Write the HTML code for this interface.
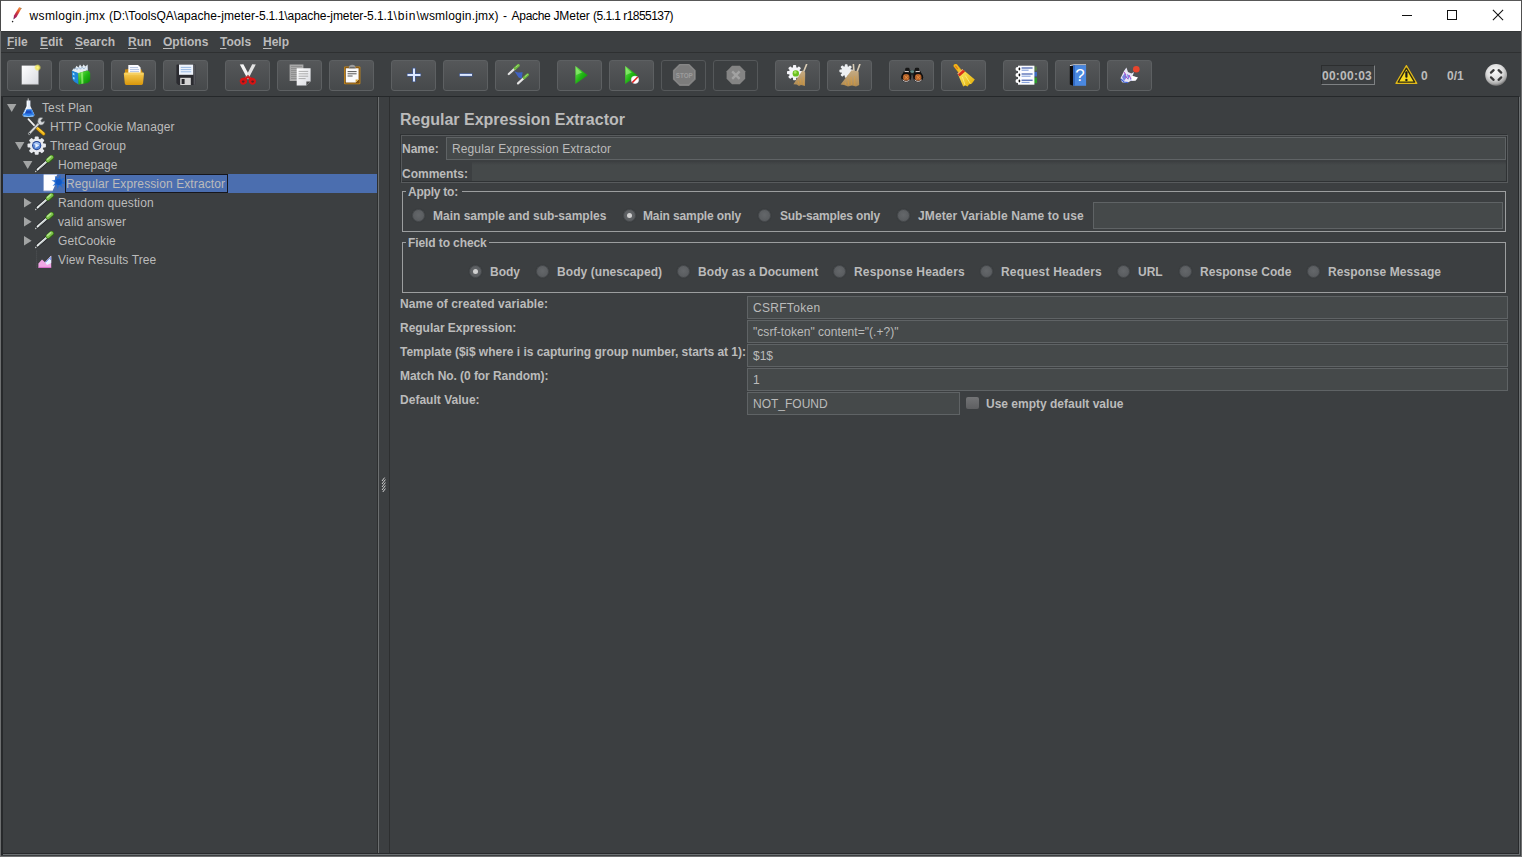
<!DOCTYPE html>
<html><head><meta charset="utf-8"><title>Apache JMeter</title>
<style>
*{box-sizing:border-box;margin:0;padding:0}
html,body{width:1522px;height:857px;overflow:hidden;background:#3c3f41;font-family:"Liberation Sans",Arial,sans-serif;font-size:12px;color:#bbbbbb}
.abs{position:absolute}
#win{position:relative;width:1522px;height:857px;overflow:hidden;background:#3c3f41}
#title{left:1px;top:1px;width:1520px;height:30px;background:#ffffff;color:#000}
#title .t{left:29px;top:8px;font-size:12px;white-space:nowrap;color:#000;line-height:14px}
#title .t2{left:0;top:8px;font-size:12px;line-height:14px;color:#000}
#title .t2 span{position:absolute;top:0;white-space:pre}
#menubar{left:1px;top:31px;width:1520px;height:21px;background:#3c3f41}
.mi{position:absolute;top:4px;font-weight:bold;font-size:12px;line-height:14px;color:#bbbbbb;white-space:nowrap}
.mi u{text-decoration:underline;text-underline-offset:2px}
#toolbar{left:1px;top:53px;width:1520px;height:43px;background:#3c3f41}
.tb{position:absolute;top:7px;width:45px;height:31px;border:1px solid #5d6062;border-radius:3px;background:linear-gradient(#555759,#46494b)}
.tb svg{position:absolute;left:10px;top:3px;width:24px;height:24px}
.lbl{position:absolute;font-weight:bold;white-space:nowrap;line-height:14px}
.txt{position:absolute;white-space:nowrap;line-height:14px}
.tf{position:absolute;background:#45494a;border:1px solid #5f6365;height:23px}
.tf span{position:absolute;left:5px;top:4px;line-height:14px;white-space:nowrap}
.row{position:absolute;left:0;height:19px;width:374px}
.row .txt{top:3px;letter-spacing:.11px}
.radio{position:absolute;width:13px;height:13px;border-radius:50%;background:radial-gradient(circle at 50% 45%,#64676a 0,#5c5f62 55%,#53565a 100%);border:1px solid #484b4e;box-shadow:0 0 1px #2e3033}
.radio.on::after{content:"";position:absolute;left:3px;top:3px;width:5px;height:5px;border-radius:50%;background:#d0d0d0}
.tb.dis{background:#3c3f41;border-color:#55585a}
.grp{border:1px solid #9c9e9f}
.gl{background:#3c3f41}
</style></head>
<body><div id="win">
<!-- window frame -->
<div class="abs" style="left:0;top:0;width:1522px;height:1px;background:#585858"></div>
<div class="abs" style="left:0;top:0;width:1px;height:857px;background:#6e7071"></div><div class="abs" style="left:0;top:0;width:1px;height:31px;background:#4a4a4a"></div>
<div class="abs" id="title">
  <svg class="abs" style="left:7px;top:5px" width="16" height="18" viewBox="0 0 16 18"><defs><linearGradient id="gFea" x1="12.5" y1="1" x2="5.5" y2="13" gradientUnits="userSpaceOnUse"><stop offset="0" stop-color="#f6a04a"/><stop offset=".35" stop-color="#e2552e"/><stop offset=".6" stop-color="#c22a4c"/><stop offset=".85" stop-color="#a01e58"/><stop offset="1" stop-color="#4a2458"/></linearGradient></defs><path d="M11.2 1 L13.4 2.4 L8.6 11 L5.4 13.4 L6 9.6 Z" fill="url(#gFea)"/><path d="M12.6 1.4 L13.6 2.2 L12.8 3.4" fill="#6a5a3a"/><circle cx="4.6" cy="15.6" r=".8" fill="#222"/></svg>
  <div class="abs t2"><span style="left:28.6px;letter-spacing:0.311px">wsmlogin.jmx </span><span style="left:108.0px;letter-spacing:0.010px">(D:\ToolsQA</span><span style="left:172.8px;letter-spacing:0.084px">\apache-jmeter-</span><span style="left:258.1px;letter-spacing:-0.301px">5.1.1</span><span style="left:283.3px;letter-spacing:-0.082px">\apache-jmeter-5.1.1</span><span style="left:392.4px;letter-spacing:0.935px">\bin</span><span style="left:415.5px;letter-spacing:0.203px">\wsmlogin.jmx</span><span style="left:493.5px;letter-spacing:0.532px">) - </span><span style="left:510.6px;letter-spacing:-0.321px">Apache </span><span style="left:552.4px;letter-spacing:-0.045px">JMeter </span><span style="left:592.1px;letter-spacing:-0.547px">(5.1.1 </span><span style="left:622.3px;letter-spacing:-0.558px">r1855137)</span></div>
  <div class="abs" style="left:1401px;top:14px;width:10px;height:1px;background:#111"></div>
  <div class="abs" style="left:1446px;top:9px;width:10px;height:10px;border:1px solid #111"></div>
  <svg class="abs" style="left:1491px;top:8px" width="12" height="12" viewBox="0 0 12 12"><path d="M0.9 0.9L11.1 11.1M11.1 0.9L0.9 11.1" stroke="#111" stroke-width="1.05"/></svg>
</div>
<div class="abs" id="menubar">
  <div class="mi" style="left:6px"><u>F</u>ile</div>
  <div class="mi" style="left:39px"><u>E</u>dit</div>
  <div class="mi" style="left:74px"><u>S</u>earch</div>
  <div class="mi" style="left:127px"><u>R</u>un</div>
  <div class="mi" style="left:162px"><u>O</u>ptions</div>
  <div class="mi" style="left:219px"><u>T</u>ools</div>
  <div class="mi" style="left:262px"><u>H</u>elp</div>
</div>
<div class="abs" style="left:1px;top:52px;width:1520px;height:1px;background:#2e3031"></div><div class="abs" style="left:1px;top:53px;width:1520px;height:1px;background:#484b4d"></div>
<div class="abs" id="toolbar">
<svg width="0" height="0" style="position:absolute"><defs>
<linearGradient id="gGreen" x1="0" y1="0" x2="1" y2="1"><stop offset="0" stop-color="#7dea5a"/><stop offset=".5" stop-color="#22b815"/><stop offset="1" stop-color="#0a7a08"/></linearGradient>
<linearGradient id="gFolder" x1="0" y1="0" x2="0" y2="1"><stop offset="0" stop-color="#f7cf57"/><stop offset="1" stop-color="#d9960a"/></linearGradient>
<linearGradient id="gPage" x1="0" y1="0" x2="1" y2="1"><stop offset="0" stop-color="#ffffff"/><stop offset="1" stop-color="#d8dae0"/></linearGradient>
<linearGradient id="gBroom" x1="0" y1="0" x2="0" y2="1"><stop offset="0" stop-color="#c6ac84"/><stop offset="1" stop-color="#b08a50"/></linearGradient>
<linearGradient id="gYel" x1="0" y1="0" x2="1" y2="1"><stop offset="0" stop-color="#fff06a"/><stop offset="1" stop-color="#e0a800"/></linearGradient>
<radialGradient id="gGlow"><stop offset="0" stop-color="#fff98a"/><stop offset=".5" stop-color="#f4e95a" stop-opacity=".9"/><stop offset="1" stop-color="#f4e95a" stop-opacity="0"/></radialGradient>
<radialGradient id="gBall" cx=".45" cy=".35" r=".62"><stop offset="0" stop-color="#fafafa"/><stop offset=".6" stop-color="#dcdcdc"/><stop offset=".9" stop-color="#a8a8a8"/><stop offset="1" stop-color="#808080"/></radialGradient>
<linearGradient id="gPip" x1="0" y1="1" x2="1" y2="0"><stop offset="0" stop-color="#f0f0f0"/><stop offset=".55" stop-color="#d8d8d8"/><stop offset=".62" stop-color="#7cc04c"/><stop offset="1" stop-color="#5aa032"/></linearGradient>
</defs></svg>
<!-- new -->
<div class="tb" style="left:6px"><svg viewBox="0 0 24 24"><rect x="3.7" y="1.6" width="16.8" height="18.8" fill="url(#gPage)"/><path d="M3.7 20.4h16.8" stroke="#9a9a9a" stroke-width=".6"/><circle cx="19.6" cy="3.6" r="3.6" fill="url(#gGlow)"/></svg></div>
<!-- templates -->
<div class="tb" style="left:58px"><svg viewBox="0 0 24 24"><path d="M2 7 L3.4 4.4 L5 5.2 L6.4 1.8 L8.4 3.6 L10 .6 L12 3 L13.6 .4 L15.4 2.6 L17.6 .4 L17.8 6 L8.4 9.4 Z" fill="#e4ecf2"/><path d="M4 5.4 l1.6 -1.6 l1.4 1.8 l1.8 -2.4 l1.6 2 l1.8 -2.2 l1.6 2 l1.6 -1.6" stroke="#9cb8d8" stroke-width=".9" fill="none"/><path d="M17.6 .6 L17.8 7.4 L16.6 7.6 Z" fill="#b8c8dc"/><path d="M1.8 6.8 L8.2 9 L8.6 20.4 L4.6 18 Q2.4 16.4 2.2 14 Z" fill="#1e86d8"/><path d="M8.2 9 L17.8 6.6 Q20 7.4 20.2 9.6 L20.2 16.6 Q19.6 18.4 17.6 19 L8.6 20.6 Z" fill="url(#gGreen)"/><path d="M11 8.6 L13 8.2 L13.4 19.6 L11.4 20Z" fill="#98f074" opacity=".75"/><path d="M2.8 8.8 l1.6 .6 v2 l-1.6 -.6z M3 13 l1.6 .6 v2 l-1.6 -.6z" fill="#9fe0ff"/></svg></div>
<!-- open -->
<div class="tb" style="left:110px"><svg viewBox="0 0 24 24"><path d="M3 5.5 L7 5 L19 5 L20.5 8 L20.5 19 L3 19 Z" fill="#c98a10"/><path d="M6.3 1 L16 1 L18.6 3.6 L18.6 11 L6.3 11 Z" fill="#fbfbff"/><path d="M8 3.6h8M8 5.6h9M8 7.6h9" stroke="#9fb4d8" stroke-width=".8"/><path d="M1.8 9.5 Q2 8.5 3.2 8.5 L20.8 8.5 Q22.2 8.5 22 9.8 L21 19.6 Q20.8 21 19.5 21 L4.2 21 Q3 21 2.8 19.6 Z" fill="url(#gFolder)"/><path d="M3 10 L21 10" stroke="#fbe08a" stroke-width=".8" opacity=".8"/></svg></div>
<!-- save -->
<div class="tb" style="left:162px"><svg viewBox="0 0 24 24"><path d="M2.4 1.6 Q2.4 .6 3.4 .6 L20.4 .6 Q21.5 .6 21.5 1.6 L21.5 20 Q21.5 21 20.4 21 L4.4 21 L2.4 19 Z" fill="#2b2b30"/><path d="M19.6 .8 L21.4 .8 L21.4 20.8 L19.6 20.8Z" fill="#55565c"/><rect x="5" y=".6" width="14.2" height="10.2" fill="#eef3fb"/><path d="M6.8 3.4h10.4M6.8 5.6h10.4M6.8 7.8h10.4" stroke="#8fb2e2" stroke-width=".9"/><rect x="6.2" y="13.8" width="10.6" height="7.2" fill="#d4d4d4"/><rect x="7.6" y="15" width="3" height="5" fill="#26262a"/></svg></div>
<!-- cut -->
<div class="tb" style="left:224px"><svg viewBox="0 0 24 24"><path d="M3.8 .4 L7.4 .2 L14.4 13.6 L11.6 15 Z" fill="#f4f4f4"/><path d="M19.8 .4 L16.2 .2 L9.4 13.6 L12.2 15 Z" fill="#e2e2e2"/><path d="M12 10.6 L14.4 13.6 L12 15.4 L9.4 13.6Z" fill="#d8d8d8"/><ellipse cx="7.4" cy="17.2" rx="3.6" ry="3.4" fill="#d81414" transform="rotate(-25 7.4 17.2)"/><ellipse cx="16.4" cy="17.2" rx="3.6" ry="3.4" fill="#d81414" transform="rotate(25 16.4 17.2)"/><path d="M8.6 15.4 L12 12.6 L15.2 15.4" stroke="#d81414" stroke-width="2.4" fill="none"/><ellipse cx="7.2" cy="17.6" rx="1.4" ry="1.1" fill="#5a2224"/><ellipse cx="16.6" cy="17.6" rx="1.4" ry="1.1" fill="#5a2224"/><circle cx="11.9" cy="12" r=".7" fill="#777"/></svg></div>
<!-- copy -->
<div class="tb" style="left:276px"><svg viewBox="0 0 24 24"><rect x="1.6" y=".5" width="13.8" height="16.5" fill="#a9a9a9"/><path d="M3 2.5h11M3 4.5h11M3 6.5h6M3 8.5h6M3 10.5h6M3 12.5h6M3 14.5h6" stroke="#8a8a8a" stroke-width=".8"/><path d="M8.7 4.2 L22.6 4.2 L22.6 17.4 L18.4 21.5 L8.7 21.5 Z" fill="url(#gPage)"/><path d="M22.6 17.4 L18.4 17.4 L18.4 21.5 Z" fill="#4a4a4a"/><path d="M10.6 7.4h9.6M10.6 9.8h9.6M10.6 12.2h9.6M10.6 14.6h7" stroke="#9a9a9a" stroke-width=".8"/></svg></div>
<!-- paste -->
<div class="tb" style="left:328px"><svg viewBox="0 0 24 24"><rect x="4" y="2.4" width="16.4" height="17.8" rx="1" fill="#c88a1c"/><rect x="4.8" y="3.2" width="14.8" height="16.2" rx=".6" fill="#7a4e10"/><path d="M5.8 4.2 L18.6 4.2 L18.6 15.6 L15.6 18.6 L5.8 18.6 Z" fill="#fbfbfb"/><path d="M18.6 15.6 L15.6 15.6 L15.6 18.6Z" fill="#d8a840"/><path d="M7.6 7.6h9M7.6 9.8h9M7.6 12h5" stroke="#555" stroke-width="1"/><path d="M8.6 4.4 L9.4 1.8 Q12.2 -.4 15 1.8 L15.8 4.4 Z" fill="#9a9a9a"/><path d="M9.6 3.6h5.2" stroke="#555" stroke-width=".8"/></svg></div>
<!-- plus -->
<div class="tb" style="left:390px"><svg viewBox="0 0 24 24"><path d="M12 3.8v14.2M4.9 10.9h14.2" stroke="#3a60c0" stroke-width="3.8" opacity=".5"/><path d="M12 4.4v13M5.5 10.9h13" stroke="#dce8ff" stroke-width="2"/></svg></div>
<!-- minus -->
<div class="tb" style="left:442px"><svg viewBox="0 0 24 24"><path d="M5.2 10.9h13.4" stroke="#3a60c0" stroke-width="3.8" opacity=".5"/><path d="M5.8 10.9h12.2" stroke="#dce8ff" stroke-width="2"/></svg></div>
<!-- toggle -->
<div class="tb" style="left:494px"><svg viewBox="0 0 24 24"><path d="M8.4 7.2 L12 8.6 L16.6 8.2 L15.8 14.8 L12.6 13.6 L10.6 10.4 Z" fill="#3f62c4"/><path d="M2.8 10 L9 4.4" stroke="#e4e4e4" stroke-width="2.2" stroke-linecap="round"/><path d="M12 19.4 L18.2 13.8" stroke="#e4e4e4" stroke-width="2.2" stroke-linecap="round"/><path d="M9 4.4 L12.4 1.4" stroke="#6cb83e" stroke-width="2.8" stroke-linecap="round"/><path d="M18.2 13.8 L21.6 10.8" stroke="#6cb83e" stroke-width="2.8" stroke-linecap="round"/><path d="M10 3 L12.2 1.2" stroke="#a6e07e" stroke-width=".9" stroke-linecap="round"/><path d="M19.2 12.4 L21.4 10.6" stroke="#a6e07e" stroke-width=".9" stroke-linecap="round"/></svg></div>
<!-- start -->
<div class="tb" style="left:556px"><svg viewBox="0 0 24 24"><path d="M7.4 2 L19.8 11.2 L7.4 20 Z" fill="url(#gGreen)"/><path d="M8.2 4 L14 8.4 L8.2 11 Z" fill="#a8f58a" opacity=".55"/></svg></div>
<!-- start no pauses -->
<div class="tb" style="left:608px"><svg viewBox="0 0 24 24"><path d="M5.2 2 L17.4 11.2 L5.2 20 Z" fill="url(#gGreen)"/><path d="M6 4 L11.8 8.4 L6 11 Z" fill="#a8f58a" opacity=".55"/><circle cx="15" cy="15.8" r="3.7" fill="#fff" stroke="#e8e8f4" stroke-width=".6"/><path d="M12.2 18.6 L17.8 13" stroke="#e02020" stroke-width="1.5"/></svg></div>
<!-- stop (disabled) -->
<div class="tb dis" style="left:660px"><svg viewBox="0 0 24 24"><path d="M7.6 -.4 L17 -.4 L23.7 6.2 L23.7 15.4 L17 22 L7.6 22 L.9 15.4 L.9 6.2 Z" fill="#7c7c7c"/><path d="M8 .8 L16.6 .8 L22.6 6.7 L22.6 14.9 L16.6 20.8 L8 20.8 L2 14.9 L2 6.7 Z" fill="none" stroke="#8e8e8e" stroke-width=".8"/><text x="12.3" y="13.6" font-family="Liberation Sans,sans-serif" font-weight="bold" font-size="7" fill="#9c9c9c" text-anchor="middle" textLength="17" lengthAdjust="spacingAndGlyphs">STOP</text></svg></div>
<!-- shutdown (disabled) -->
<div class="tb dis" style="left:712px"><svg viewBox="0 0 24 24"><path d="M8 1.8 L15.8 1.8 L21.2 7.2 L21.2 14.8 L15.8 20.2 L8 20.2 L2.6 14.8 L2.6 7.2 Z" fill="#848484"/><path d="M8.2 7.4 L15.6 14.8 M15.6 7.4 L8.2 14.8" stroke="#a2a2a2" stroke-width="2.4"/></svg></div>
<!-- clear -->
<div class="tb" style="left:774px"><svg viewBox="0 0 24 24"><g transform="translate(8.6 8.6)"><circle r="5.6" fill="#f4f4f8"/><g fill="#f4f4f8"><rect x="-1.6" y="-7.6" width="3.2" height="15.2" rx=".8"/><rect x="-1.6" y="-7.6" width="3.2" height="15.2" rx=".8" transform="rotate(45)"/><rect x="-1.6" y="-7.6" width="3.2" height="15.2" rx=".8" transform="rotate(90)"/><rect x="-1.6" y="-7.6" width="3.2" height="15.2" rx=".8" transform="rotate(135)"/></g></g><circle cx="9.8" cy="9.4" r="3.2" fill="#6cc020"/><circle cx="9.2" cy="8.4" r="1.4" fill="#a8e860"/><path d="M20.6 .4 L17.4 8.2" stroke="#d8cbb4" stroke-width="1.6" stroke-linecap="round"/><path d="M16.4 6.6 L19.2 8.4 L19 22 L15 21 L13 22 L10.6 20.4 L7.4 20.2 Z" fill="url(#gBroom)"/><path d="M12 17 l1 3 M14.5 15 l.6 5.4 M17 13 l.4 8" stroke="#e8a030" stroke-width=".7" opacity=".7"/></svg></div>
<!-- clear all -->
<div class="tb" style="left:826px"><svg viewBox="0 0 24 24"><g transform="translate(8.2 7)"><circle r="4.8" fill="#eef0f2"/><g fill="#eef0f2"><rect x="-1.4" y="-6.8" width="2.8" height="13.6" rx=".8"/><rect x="-1.4" y="-6.8" width="2.8" height="13.6" rx=".8" transform="rotate(45)"/><rect x="-1.4" y="-6.8" width="2.8" height="13.6" rx=".8" transform="rotate(90)"/><rect x="-1.4" y="-6.8" width="2.8" height="13.6" rx=".8" transform="rotate(135)"/></g></g><path d="M15.4 .4 L16 8" stroke="#d8cbb4" stroke-width="1.6" stroke-linecap="round"/><path d="M21.8 .4 L19 8" stroke="#d8cbb4" stroke-width="1.6" stroke-linecap="round"/><path d="M13.6 6.2 L20.6 7.6 L21.2 21 L18 22.4 L14 21.4 L10 22.4 L6 21 L2.6 20.6 Z" fill="url(#gBroom)"/><path d="M7 18 l1 3 M10 15.5 l.6 5.4 M13 13 l.4 8 M16.5 12 l.4 9" stroke="#e8a030" stroke-width=".7" opacity=".7"/></svg></div>
<!-- search -->
<div class="tb" style="left:888px"><svg viewBox="0 0 24 24"><rect x="5.2" y="3.8" width="4.4" height="4.4" rx="1.4" fill="#161616"/><rect x="14.8" y="3.8" width="4.4" height="4.4" rx="1.4" fill="#161616"/><rect x="9" y="6" width="6.4" height="5.4" fill="#202a2a"/><ellipse cx="12.2" cy="7.6" rx="2.2" ry="1.3" fill="#5e8a86"/><path d="M4 7 L10 7 L11.4 13 L1.4 13 Z" fill="#161616"/><path d="M20.4 7 L14.4 7 L13 13 L23 13 Z" fill="#161616"/><path d="M4.6 7.6 h4.2 M15.6 7.6 h4.2" stroke="#cfc6c6" stroke-width="1.3"/><circle cx="6.2" cy="13.2" r="5" fill="#101010"/><circle cx="18.2" cy="13.2" r="5" fill="#101010"/><circle cx="6.2" cy="13.4" r="3.3" fill="#b0602a"/><circle cx="18.2" cy="13.4" r="3.3" fill="#b0602a"/><path d="M4.4 11.6l3.6 3.6m0-3.6l-3.6 3.6M16.4 11.6l3.6 3.6m0-3.6l-3.6 3.6" stroke="#ec9444" stroke-width=".9"/><path d="M2.6 15.8 Q6.2 19.2 9.8 15.8 M14.6 15.8 Q18.2 19.2 21.8 15.8" stroke="#dcd4d4" stroke-width=".9" fill="none"/></svg></div>
<!-- reset search -->
<div class="tb" style="left:940px"><svg viewBox="0 0 24 24"><path d="M3.6 1.8 L9 8.6" stroke="#d89a10" stroke-width="4.2" stroke-linecap="round"/><path d="M3.6 1.8 L9 8.6" stroke="#f2c020" stroke-width="3" stroke-linecap="round"/><path d="M3.6 2.2 L5.4 4.6" stroke="#e87818" stroke-width="1.3" stroke-linecap="round"/><path d="M6 10.6 L11.4 6 L22.8 15.6 L21.2 17.8 L19.6 19.8 L17 20.4 L15.6 22.4 L13.2 21.6 L11.2 22.6 Z" fill="url(#gYel)"/><path d="M5.6 10 L10.8 5.4 L13.2 7.6 L7.6 12.6 Z" fill="#d8301c"/><path d="M5.6 10 L10.8 5.4" stroke="#f4b070" stroke-width="1.1"/><path d="M10.4 13 l2.6 8 M13.4 11.6 l5 8" stroke="#fff8a0" stroke-width=".9" opacity=".7"/></svg></div>
<!-- function helper -->
<div class="tb" style="left:1002px"><svg viewBox="0 0 24 24"><rect x="20" y="8" width="3" height="4.4" fill="#3f6cc0"/><rect x="20" y="13.6" width="3" height="5.6" fill="#2a9a2a"/><rect x="20" y="2.6" width="3" height="4" fill="#58903c" opacity=".6"/><rect x="4" y="1.7" width="16.4" height="19" fill="#fbfcff"/><path d="M7.6 4h11M7.6 10h11M7.6 16.2h11" stroke="#1c3c9a" stroke-width="1"/><path d="M7.6 6.2h7M7.6 12.2h9M7.6 18.4h8" stroke="#7c9ad8" stroke-width="1"/><g fill="#fff"><circle cx="3.4" cy="5" r="1.9"/><circle cx="3.4" cy="11" r="1.9"/><circle cx="3.4" cy="17" r="1.9"/></g><g fill="#111"><rect x="4.6" y="3.6" width="1.6" height="2.8" rx=".8"/><rect x="4.6" y="9.6" width="1.6" height="2.8" rx=".8"/><rect x="4.6" y="15.6" width="1.6" height="2.8" rx=".8"/></g></svg></div>
<!-- help -->
<div class="tb" style="left:1054px"><svg viewBox="0 0 24 24"><path d="M3.8 2 L7.4 1 L7.4 21.8 L3.8 20.4 Z" fill="#0c0c0e"/><path d="M4 1.6 L8 .8 L20 .8" stroke="#e8e8ee" stroke-width=".9" fill="none"/><rect x="7.3" y="1.2" width="12.8" height="20.6" fill="#4a88e0"/><rect x="7.3" y="1.2" width="1.6" height="20.6" fill="#2f68c4"/><text x="14" y="17.4" font-family="Liberation Sans,sans-serif" font-size="17" fill="#ffffff" text-anchor="middle">?</text></svg></div>
<!-- heap -->
<div class="tb" style="left:1106px"><svg viewBox="0 0 24 24"><path d="M2.6 14 L6 7 L8.4 3.4 L10 8 L13.4 9.4 L16 8 L14.6 12 L19.8 13.6 L17.6 16.6 L12.6 17 L9 19 L4 18.2 Z" fill="#e8e6f6"/><path d="M4 13 l3 -4 l2 4 l-3 4z M9 10 l3 2 l-2 4z M12 14 l4 1 l-3 2z" fill="#5a6cd8" opacity=".8"/><path d="M6 8 l2 3 M7 12 l3 3 M11 11 l2 4" stroke="#b03cc8" stroke-width=".9"/><path d="M14 12 L19.8 13.6 L17.6 16.6 L13 16.6Z" fill="#fff"/><path d="M3 15 l3 3 l4 .6" stroke="#3f62d8" stroke-width="1.2" fill="none"/><circle cx="18.3" cy="5.2" r="3.3" fill="#e8452c"/></svg></div>
<!-- right side status -->
<div class="abs" style="left:1320px;top:12px;width:54px;height:20px;border:1px solid;border-color:#2c2e2f #7e8183 #7e8183 #2c2e2f"></div>
<div class="lbl" style="left:1321px;top:16px;color:#bbbbbb;letter-spacing:.25px">00:00:03</div>
<svg class="abs" style="left:1393px;top:10px" width="26" height="22" viewBox="0 0 26 22"><path d="M12.4 2.6 L22.8 20.4 L2 20.4 Z" fill="#e8c21c" stroke="#e0b818" stroke-width="1.2" stroke-linejoin="round"/><path d="M12.4 5.2 L20.6 19.2 L4.2 19.2 Z" fill="#f8dc20" stroke="#2c2810" stroke-width="1.3" stroke-linejoin="round"/><rect x="11.3" y="8.2" width="2.2" height="6.6" rx="1" fill="#1a1a1a"/><circle cx="12.4" cy="17" r="1.2" fill="#1a1a1a"/></svg>
<div class="lbl" style="left:1420px;top:16px">0</div>
<div class="lbl" style="left:1446px;top:16px">0/1</div>
<svg class="abs" style="left:1483px;top:10px" width="24" height="24" viewBox="0 0 24 24"><circle cx="12.1" cy="11.9" r="10.9" fill="url(#gBall)"/><path d="M7 9.6 L9.6 7.2 M14.6 7.2 L17.2 9.6 M7 14.4 L9.6 16.8 M14.6 16.8 L17.2 14.4" stroke="#3a3a3a" stroke-width="2.3" stroke-linecap="round"/></svg>

</div>
<div class="abs" style="left:1px;top:96px;width:1518px;height:1px;background:#25282a"></div><div class="abs" style="left:1px;top:31px;width:1520px;height:1px;background:#333637"></div>
<!-- left tree -->
<div class="abs" id="tree" style="left:3px;top:98px;width:374px;height:755px;overflow:hidden">
<svg width="0" height="0" style="position:absolute"><defs>
<linearGradient id="gPip2" x1="0" y1="1" x2="1" y2="0"><stop offset="0" stop-color="#e8e8e8"/><stop offset=".5" stop-color="#b8bcbc"/><stop offset=".58" stop-color="#5a9a3a"/><stop offset="1" stop-color="#86c85a"/></linearGradient>
<g id="pip"><path d="M.5 16.6 L2.4 14.8" stroke="#c8cccc" stroke-width="1.1" stroke-linecap="round"/><path d="M2.6 14.6 L12.6 5.8" stroke="#26282a" stroke-width="3.6" stroke-linecap="round"/><path d="M2.6 14.6 L12.6 5.8" stroke="#eef2f2" stroke-width="2" stroke-linecap="round"/><path d="M3.6 14.2 L11.6 7.2" stroke="#9aa4a4" stroke-width=".6"/><path d="M13.2 5.4 L16.6 2.4" stroke="#2e6414" stroke-width="5" stroke-linecap="round"/><path d="M13 5.2 L16.4 2.2" stroke="#7cc048" stroke-width="3.8" stroke-linecap="round"/><path d="M12.6 4.4 L15.8 1.6" stroke="#b4e490" stroke-width="1.4" stroke-linecap="round"/></g>
<path id="arD" d="M0 0 L9.4 0 L4.7 8 Z" fill="#a2a4a4"/>
<path id="arR" d="M0 0 L7.6 4.7 L0 9.4 Z" fill="#a2a4a4"/>
</defs></svg>
<!-- rows: tree origin x=3,y=98 -->
<div class="row" style="top:0"><svg class="abs" style="left:3.6px;top:5.8px" width="10" height="9"><use href="#arD"/></svg>
 <svg class="abs" style="left:16px;top:0" width="19" height="19" viewBox="0 0 19 19"><path d="M9.2 .4 L9.2 3" stroke="#c8c8c8" stroke-width="1"/><path d="M7.6 2.6 L11.4 2.6 L11.4 8 L15.4 16.6 Q15.8 18.6 13.6 18.8 L5.4 18.8 Q3.2 18.6 3.6 16.6 L7.6 8 Z" fill="#e4ecf8"/><path d="M6.2 11.2 L12.8 11.2 L15.2 16.6 Q15.6 18.4 13.6 18.6 L5.4 18.6 Q3.4 18.4 3.8 16.6 Z" fill="#2f7fe8"/><path d="M7.4 12.4 L11.6 12.4 L13 15.6 L6 15.6Z" fill="#1c4cc0"/><path d="M8.4 3.4 L8.4 8.4 L5.2 15.4" stroke="#ffffff" stroke-width="1" fill="none" opacity=".9"/><path d="M4.6 17.6 Q9.5 19.6 14.4 17.6" stroke="#8cc8ff" stroke-width="1" fill="none"/></svg>
 <div class="txt" style="left:39px">Test Plan</div></div>
<div class="row" style="top:19px">
 <svg class="abs" style="left:24px;top:0" width="20" height="19" viewBox="0 0 20 19"><path d="M1.4 2.2 L8.4 9.6" stroke="#f0f0f0" stroke-width="1.7" stroke-linecap="round"/><path d="M9.4 10.4 L16.6 16.8" stroke="#7a5a10" stroke-width="3.8" stroke-linecap="round"/><path d="M9.4 10.4 L16.6 16.8" stroke="#f0b414" stroke-width="2.6" stroke-linecap="round"/><path d="M10 10.2 L16.4 15.8" stroke="#ffe060" stroke-width=".8" stroke-linecap="round"/><path d="M2.2 16.6 L12.4 5.8" stroke="#5a5e60" stroke-width="3" stroke-linecap="round"/><path d="M2.2 16.6 L12.4 5.8" stroke="#d4d6d8" stroke-width="1.8" stroke-linecap="round"/><path d="M11.4 1.6 Q13.4 -.2 16 1 L13.8 3.4 L14.8 5.2 L17.4 4 Q17.8 6.8 15.4 7.8 Q13.2 8.6 11.6 7 Q10 5.2 11.4 1.6Z" fill="#d8dadc" stroke="#6a6e70" stroke-width=".6"/><circle cx="2.4" cy="16.4" r=".7" fill="#3c3f41"/></svg>
 <div class="txt" style="left:47px">HTTP Cookie Manager</div></div>
<div class="row" style="top:38px"><svg class="abs" style="left:11.6px;top:5.8px" width="10" height="9"><use href="#arD"/></svg>
 <svg class="abs" style="left:24px;top:0" width="20" height="19" viewBox="0 0 20 19"><g transform="translate(9.7 9.6)"><g fill="#e8eaee"><rect x="-2" y="-9.2" width="4" height="18.4" rx="1"/><rect x="-2" y="-9.2" width="4" height="18.4" rx="1" transform="rotate(45)"/><rect x="-2" y="-9.2" width="4" height="18.4" rx="1" transform="rotate(90)"/><rect x="-2" y="-9.2" width="4" height="18.4" rx="1" transform="rotate(135)"/><circle r="7"/></g><circle r="4.6" fill="#1e3c8c"/><circle r="3.7" fill="#5a88d8"/><ellipse cx="0" cy="-1.6" rx="2.8" ry="1.6" fill="#b8d0f4" opacity=".7"/><path d="M-1.4 -2.4 L2.6 0 L-1.4 2.4 Z" fill="#e8f0ff"/><path d="M-3.4 -1.6 Q0 -4.6 3.4 -1.6" stroke="#a8c4f8" stroke-width=".8" fill="none"/></g></svg>
 <div class="txt" style="left:47px">Thread Group</div></div>
<div class="row" style="top:57px"><svg class="abs" style="left:19.6px;top:5.8px" width="10" height="9"><use href="#arD"/></svg>
 <svg class="abs" style="left:32px;top:0" width="19" height="19"><use href="#pip"/></svg>
 <div class="txt" style="left:55px">Homepage</div></div>
<div class="row" style="top:76px;background:#4b6eaf">
 <svg class="abs" style="left:40px;top:0" width="22" height="19" viewBox="0 0 22 19"><path d="M.6 .4 L14.4 .4 L12.2 4 L11.4 7.6 L12.2 11 L9.6 16.8 L.6 16.8 Z" fill="#fdfdff"/><path d="M.6 16.8 L9.6 16.8" stroke="#c8c8d8" stroke-width=".8"/><polygon points="17.3,0.6 17.7,5.1 22.0,3.8 19.1,7.2 23.1,9.4 18.6,9.8 19.9,14.1 16.5,11.2 14.3,15.2 13.9,10.7 9.6,12.0 12.5,8.6 8.5,6.4 13.0,6.0 11.7,1.7 15.1,4.6" fill="#1f6ad6" opacity=".92"/><circle cx="15.8" cy="7.9" r="3" fill="#1258c4"/></svg>
 <div class="abs" style="left:62px;top:0;width:163px;height:19px;border:1px solid #16161c"></div>
 <div class="txt" style="left:63px;color:#bbbbbb">Regular Expression Extractor</div></div>
<div class="row" style="top:95px"><svg class="abs" style="left:20.6px;top:4.8px" width="9" height="10"><use href="#arR"/></svg>
 <svg class="abs" style="left:32px;top:0" width="19" height="19"><use href="#pip"/></svg>
 <div class="txt" style="left:55px">Random question</div></div>
<div class="row" style="top:114px"><svg class="abs" style="left:20.6px;top:4.8px" width="9" height="10"><use href="#arR"/></svg>
 <svg class="abs" style="left:32px;top:0" width="19" height="19"><use href="#pip"/></svg>
 <div class="txt" style="left:55px">valid answer</div></div>
<div class="row" style="top:133px"><svg class="abs" style="left:20.6px;top:4.8px" width="9" height="10"><use href="#arR"/></svg>
 <svg class="abs" style="left:32px;top:0" width="19" height="19"><use href="#pip"/></svg>
 <div class="txt" style="left:55px">GetCookie</div></div>
<div class="row" style="top:152px">
 <svg class="abs" style="left:32px;top:0" width="19" height="19" viewBox="0 0 19 19"><path d="M1.6 .6 L1.6 18" stroke="#585b5d" stroke-width=".8" stroke-dasharray="1 1"/><path d="M3.4 17.4 L3.4 13.4 L7 9.6 L10 12.2 L16.2 5.8 L16.2 17.4 Z" fill="#f0a8e4"/><path d="M10 12.2 L16.2 5.8 L16.2 13 L12 15 Z" fill="#e8f0ff"/><path d="M10.6 12.4 L15.6 7.4 L15.6 10" stroke="#7c9cf0" stroke-width="1" fill="none"/><path d="M3.4 17.4 L16.2 17.4" stroke="#e070d0" stroke-width="1"/></svg>
 <div class="txt" style="left:55px">View Results Tree</div></div>

</div>
<div class="abs" style="left:377px;top:97px;width:1px;height:757px;background:#2d2f30"></div>
<div class="abs" style="left:378px;top:97px;width:1px;height:757px;background:#6c6f70"></div>
<div class="abs" style="left:389px;top:97px;width:1px;height:757px;background:#2d2f30"></div>
<!-- right panel -->
<div class="abs" id="panel" style="left:0;top:0;width:1522px;height:857px">
<div class="lbl" style="left:400px;top:111px;font-size:16px;line-height:18px">Regular Expression Extractor</div>
<!-- name panel border -->
<div class="abs" style="left:400px;top:134px;width:1107px;height:48px;border:1px solid #2f3234"></div>
<div class="abs" style="left:401px;top:135px;width:1107px;height:48px;border:1px solid #585b5d"></div>
<div class="lbl" style="left:402px;top:142px">Name:</div>
<div class="tf" style="left:446px;top:137px;width:1060px"><span style="letter-spacing:.11px">Regular Expression Extractor</span></div>
<div class="lbl" style="left:402px;top:167px">Comments:</div>
<div class="abs" style="left:472px;top:162px;width:1034px;height:19px;background:linear-gradient(#3e4143,#45494a 3px,#45494a)"></div>
<!-- Apply to -->
<div class="abs grp" style="left:402px;top:191px;width:1104px;height:41px"></div>
<div class="lbl gl" style="left:406px;top:185px;padding:0 4px 0 2px;letter-spacing:-.22px">Apply to:</div>
<div class="radio" style="left:412px;top:209px"></div><div class="lbl" style="left:433px;top:209px">Main sample and sub-samples</div>
<div class="radio on" style="left:623px;top:209px"></div><div class="lbl" style="left:643px;top:209px;letter-spacing:-0.13px">Main sample only</div>
<div class="radio" style="left:758px;top:209px"></div><div class="lbl" style="left:780px;top:209px;letter-spacing:-0.17px">Sub-samples only</div>
<div class="radio" style="left:897px;top:209px"></div><div class="lbl" style="left:918px;top:209px;letter-spacing:0.11px">JMeter Variable Name to use</div>
<div class="tf" style="left:1093px;top:202px;width:410px;height:27px"></div>
<!-- Field to check -->
<div class="abs grp" style="left:402px;top:242px;width:1104px;height:51px"></div>
<div class="lbl gl" style="left:406px;top:236px;padding:0 2px;letter-spacing:-.1px">Field to check</div>
<div class="radio on" style="left:469px;top:265px"></div><div class="lbl" style="left:490px;top:265px">Body</div>
<div class="radio" style="left:536px;top:265px"></div><div class="lbl" style="left:557px;top:265px;letter-spacing:0.07px">Body (unescaped)</div>
<div class="radio" style="left:677px;top:265px"></div><div class="lbl" style="left:698px;top:265px;letter-spacing:0.09px">Body as a Document</div>
<div class="radio" style="left:833px;top:265px"></div><div class="lbl" style="left:854px;top:265px;letter-spacing:0.18px">Response Headers</div>
<div class="radio" style="left:980px;top:265px"></div><div class="lbl" style="left:1001px;top:265px;letter-spacing:0.19px">Request Headers</div>
<div class="radio" style="left:1117px;top:265px"></div><div class="lbl" style="left:1138px;top:265px">URL</div>
<div class="radio" style="left:1179px;top:265px"></div><div class="lbl" style="left:1200px;top:265px;letter-spacing:0.06px">Response Code</div>
<div class="radio" style="left:1307px;top:265px"></div><div class="lbl" style="left:1328px;top:265px;letter-spacing:0.11px">Response Message</div>
<!-- fields -->
<div class="lbl" style="left:400px;top:297px;letter-spacing:0.08px">Name of created variable:</div>
<div class="tf" style="left:747px;top:296px;width:761px"><span style="letter-spacing:.3px">CSRFToken</span></div>
<div class="lbl" style="left:400px;top:321px;letter-spacing:-0.02px">Regular Expression:</div>
<div class="tf" style="left:747px;top:320px;width:761px"><span style="letter-spacing:.04px">"csrf-token" content="(.+?)"</span></div>
<div class="lbl" style="left:400px;top:345px;letter-spacing:-0.02px">Template ($i$ where i is capturing group number, starts at 1):</div>
<div class="tf" style="left:747px;top:344px;width:761px"><span>$1$</span></div>
<div class="lbl" style="left:400px;top:369px;letter-spacing:-0.06px">Match No. (0 for Random):</div>
<div class="tf" style="left:747px;top:368px;width:761px"><span>1</span></div>
<div class="lbl" style="left:400px;top:393px;letter-spacing:0.02px">Default Value:</div>
<div class="tf" style="left:747px;top:392px;width:213px"><span>NOT_FOUND</span></div>
<div class="abs" style="left:966px;top:397px;width:13px;height:12px;border-radius:2px;background:linear-gradient(#737476,#5e5f61)"></div>
<div class="lbl" style="left:986px;top:397px">Use empty default value</div>
<!-- divider grip -->
<svg class="abs" style="left:380px;top:476px" width="8" height="18" viewBox="0 0 8 18"><path d="M2 5 L4.6 1.6 M2 8 L5.4 3.6 M2 11 L5.4 6.6 M2 14 L5.4 9.6 M2.8 16 L5.4 12.6" stroke="#e0e0e0" stroke-width=".9"/></svg>
<!-- window frame right/bottom -->
<div class="abs" style="left:1518px;top:96px;width:1px;height:758px;background:#27292b"></div>
<div class="abs" style="left:1519px;top:97px;width:1px;height:758px;background:#6b6f71"></div>
<div class="abs" style="left:1521px;top:31px;width:1px;height:826px;background:#707172"></div>
<div class="abs" style="left:1521px;top:0;width:1px;height:31px;background:#505050"></div>
<div class="abs" style="left:1px;top:853px;width:1518px;height:1px;background:#27292b"></div>
<div class="abs" style="left:3px;top:854px;width:1517px;height:1px;background:#6b6f71"></div>
<div class="abs" style="left:0;top:856px;width:1522px;height:1px;background:#707172"></div>
<div class="abs" style="left:1px;top:96px;width:2px;height:759px;background:#27292b"></div>

</div>
</div></body></html>
